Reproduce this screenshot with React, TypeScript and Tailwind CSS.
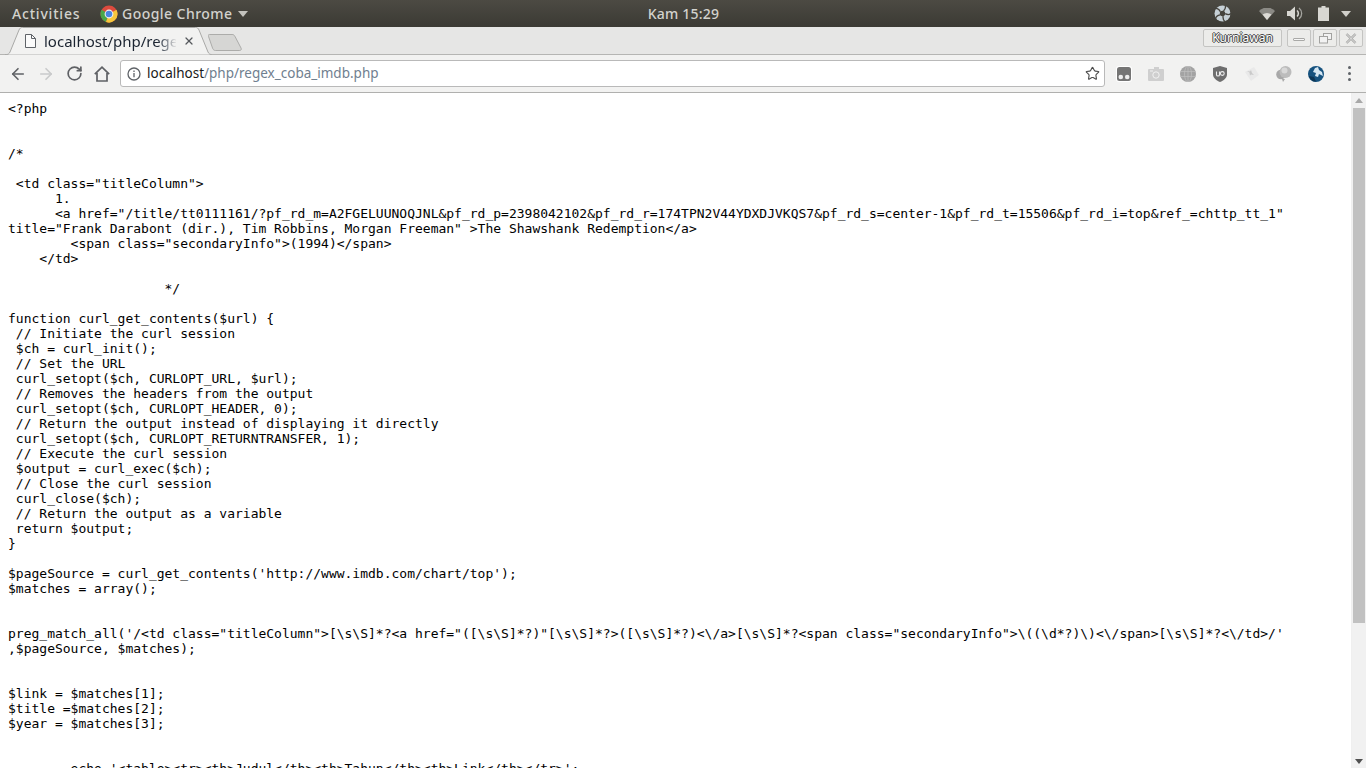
import { ArrowLeft, ArrowRight, RotateCw, Star, X } from "lucide-react";

const SOURCE = `<?php


/*

 <td class="titleColumn">
      1.
      <a href="/title/tt0111161/?pf_rd_m=A2FGELUUNOQJNL&pf_rd_p=2398042102&pf_rd_r=174TPN2V44YDXDJVKQS7&pf_rd_s=center-1&pf_rd_t=15506&pf_rd_i=top&ref_=chttp_tt_1"
title="Frank Darabont (dir.), Tim Robbins, Morgan Freeman" >The Shawshank Redemption</a>
        <span class="secondaryInfo">(1994)</span>
    </td>

                    */

function curl_get_contents($url) {
 // Initiate the curl session
 $ch = curl_init();
 // Set the URL
 curl_setopt($ch, CURLOPT_URL, $url);
 // Removes the headers from the output
 curl_setopt($ch, CURLOPT_HEADER, 0);
 // Return the output instead of displaying it directly
 curl_setopt($ch, CURLOPT_RETURNTRANSFER, 1);
 // Execute the curl session
 $output = curl_exec($ch);
 // Close the curl session
 curl_close($ch);
 // Return the output as a variable
 return $output;
}

$pageSource = curl_get_contents('http://www.imdb.com/chart/top');
$matches = array();


preg_match_all('/<td class="titleColumn">[\\s\\S]*?<a href="([\\s\\S]*?)"[\\s\\S]*?>([\\s\\S]*?)<\\/a>[\\s\\S]*?<span class="secondaryInfo">\\((\\d*?)\\)<\\/span>[\\s\\S]*?<\\/td>/'
,$pageSource, $matches);


$link = $matches[1];
$title =$matches[2];
$year = $matches[3];


        echo '<table><tr><th>Judul</th><th>Tahun</th><th>Link</th></tr>';`;

function ChromeLogo() {
  return (
    <svg width="18" height="18" viewBox="0 0 18 18">
      <circle cx="9" cy="9" r="8.5" fill="#dd4b3e" />
      <path d="M9 9 L1.6 4.8 A8.5 8.5 0 0 0 6 17 Z" fill="#4aa64a" />
      <path d="M9 9 L6 17 A8.5 8.5 0 0 0 17.4 7.5 L16.5 4.8 Z" fill="#f6c63c" />
      <circle cx="9" cy="9" r="4.4" fill="#f1f1f1" />
      <circle cx="9" cy="9" r="3.3" fill="#4a86e0" />
    </svg>
  );
}

function TopBar() {
  return (
    <div className="flex h-[27px] shrink-0 items-center bg-gradient-to-b from-[#4c4a43] to-[#3b3a34] font-['Noto_Sans',sans-serif] text-[14px] font-medium text-[#d3d2cd]">
      <span className="ml-3 w-[88px] tracking-[0.8px]">Activities</span>
      <ChromeLogo />
      <span className="ml-1 tracking-[0.45px]">Google Chrome</span>
      <svg className="ml-[6px]" width="10" height="6" viewBox="0 0 10 6">
        <path d="M0 0h10L5 6z" fill="#c4c3be" />
      </svg>
      <span className="ml-[399px] w-[72px] text-center tracking-[0.2px]">Kam 15:29</span>

      <div className="ml-auto flex items-center">
        {/* aperture style tray icon */}
        <svg width="17" height="17" viewBox="-8.500 -8.500 17 17" fill="none">
          <circle r="8" fill="#c6d0d6" />
          <g stroke="#45433d" strokeWidth="1.300">
            <path d="M1 -2.500 C3 -4.500 3.500 -6.500 2.500 -8.500" />
            <path d="M1 -2.500 C3 -4.500 3.500 -6.500 2.500 -8.500" transform="rotate(72)" />
            <path d="M1 -2.500 C3 -4.500 3.500 -6.500 2.500 -8.500" transform="rotate(144)" />
            <path d="M1 -2.500 C3 -4.500 3.500 -6.500 2.500 -8.500" transform="rotate(216)" />
            <path d="M1 -2.500 C3 -4.500 3.500 -6.500 2.500 -8.500" transform="rotate(288)" />
          </g>
          <circle r="2.700" fill="#45433d" />
        </svg>
        <svg className="ml-[28px]" width="16" height="12" viewBox="0 0 16 12">
          <path d="M0 3 A11 11 0 0 1 16 3 L8 12 Z" fill="#8b8a85" />
          <path d="M3.600 6.600 A6.500 6.500 0 0 1 12.400 6.600 L8 12 Z" fill="#dcdbd6" />
        </svg>
        <svg className="ml-[12px]" width="16" height="15" viewBox="0 0 16 15" fill="none">
          <path d="M0 5h3l5-4.500v14L3 10H0z" fill="#d8d7d2" />
          <path d="M10 4.500a4 4 0 0 1 0 6" stroke="#d8d7d2" strokeWidth="1.500" />
          <path d="M12 2a7 7 0 0 1 0 11" stroke="#a5a49f" strokeWidth="1.300" />
        </svg>
        <svg className="ml-[15px]" width="11" height="15" viewBox="0 0 11 15">
          <path d="M3.500 0h4v1.500H11V15H0V1.500h3.500z" fill="#d8d7d2" />
        </svg>
        <svg className="ml-[12px] mr-[15px]" width="10" height="6" viewBox="0 0 10 6">
          <path d="M0 0h10L5 6z" fill="#d0cfca" />
        </svg>
      </div>
    </div>
  );
}

function WinButton({ children }: { children: React.ReactNode }) {
  return (
    <div className="flex h-[18px] w-[24px] items-center justify-center rounded-[2px] border border-[#c4c4c2] bg-[#ececea]">
      {children}
    </div>
  );
}

function TabStrip() {
  return (
    <div className="flex h-[28px] shrink-0 items-start border-b border-[#b5b5b3] bg-[#e6e6e5]">
      <div className="relative ml-[5px] flex h-[28px] w-[207px] items-center pl-[19px]">
        <svg className="absolute inset-0" width="207" height="28" viewBox="0 0 207 28" fill="none">
          <path d="M0 27.500h1.500C3 27.500 4 27 5 25L14 3c.7-1.700 1.600-2.500 3.500-2.500h173c1.900 0 2.800.8 3.500 2.500l9 22c1 2 2 2.500 3.500 2.500" fill="#f2f2f1" />
          <path d="M0 27.500h1.500C3 27.500 4 27 5 25L14 3c.7-1.700 1.600-2.500 3.500-2.500h173c1.900 0 2.800.8 3.500 2.500l9 22c1 2 2 2.500 3.500 2.500" stroke="#a9a9a7" />
        </svg>
        <svg className="relative" width="12" height="14" viewBox="0 0 12 14" fill="none" stroke="#5f6368">
          <path d="M1.500.5h6l4 4v9h-10z" fill="#fbfbfb" />
          <path d="M7.500.5v4h4" />
        </svg>
        <span className="relative ml-[8px] w-[132px] overflow-hidden whitespace-nowrap bg-gradient-to-r from-[#1a2330] from-[85%] to-[#e4e4e4] bg-clip-text font-['Noto_Sans',sans-serif] text-[15px] text-transparent">
          localhost/php/regex_coba_imdb.php
        </span>
        <X className="relative ml-[7px]" size={12} strokeWidth={2.500} color="#55585c" />
      </div>
      <svg className="ml-[-4px] mt-[7px]" width="35" height="17" viewBox="0 0 37 18" preserveAspectRatio="none">
        <path d="M1.500.5h24c1.500 0 2.300.7 3 2l6.500 12.500c.5 1.200 0 2.500-1.500 2.500H8c-1.500 0-2.300-.7-3-2L.5 2.500C0 1.300.3.500 1.500.5z" fill="#d6d6d4" stroke="#a8a8a6" />
      </svg>

      <div className="ml-auto mr-[3px] mt-[2px] flex items-center gap-[2px]">
        <div className="mr-[3px] flex h-[18px] w-[79px] items-center justify-center rounded-[2px] border border-[#c4c4c2] bg-[#ececea] font-['Noto_Sans',sans-serif] text-[12px] text-white [text-shadow:1px_0_0_#444,-1px_0_0_#444,0_1px_0_#444,0_-1px_0_#444]">
          Kurniawan
        </div>
        <WinButton>
          <span className="mt-[3px] h-[3px] w-[12px] rounded-[1px] border border-[#a9a9a7] bg-[#f5f5f5]" />
        </WinButton>
        <WinButton>
          <svg width="13" height="11" viewBox="0 0 13 11" fill="#f2f2f2" stroke="#a2a2a0">
            <rect x="4.500" y="0.500" width="8" height="6" />
            <rect x="0.500" y="3.500" width="8" height="6.500" />
          </svg>
        </WinButton>
        <WinButton>
          <svg width="12" height="11" viewBox="0 0 12 11">
            <path d="M1.500 1l9 9M10.500 1l-9 9" stroke="#a2a2a0" strokeWidth="2.400" />
            <path d="M1.500 1l9 9M10.500 1l-9 9" stroke="#f5f5f5" strokeWidth="0.800" />
          </svg>
        </WinButton>
      </div>
    </div>
  );
}

function ExtensionIcons() {
  return (
    <div className="ml-[11px] flex items-center gap-[16px]">
      {/* rounded square with two dots */}
      <svg width="16" height="16" viewBox="0 0 16 16">
        <rect width="16" height="16" rx="3" fill="#fff" />
        <rect x="1" y="1" width="14" height="14" rx="2.500" fill="#757575" />
        <circle cx="4.800" cy="11" r="2.300" fill="#eee" />
        <circle cx="11.200" cy="11" r="2.300" fill="#eee" />
      </svg>
      <svg width="16" height="14" viewBox="0 0 16 14">
        <rect y="2" width="16" height="12" rx="1" fill="#cfcfcf" />
        <rect x="6" width="5" height="3" fill="#cfcfcf" />
        <rect x="2" y="3.500" width="3" height="1" fill="#f2f2f2" />
        <circle cx="8" cy="8" r="3.200" fill="#cfcfcf" stroke="#f2f2f2" />
      </svg>
      <svg width="16" height="16" viewBox="0 0 16 16" fill="none">
        <circle cx="8" cy="8" r="8" fill="#a3a3a3" />
        <g stroke="#c0c0c0" strokeWidth="0.700">
          <ellipse cx="8" cy="8" rx="3.500" ry="8" />
          <path d="M0 5.500h16M0 10.500h16M8 0v16" />
        </g>
      </svg>
      <svg width="16" height="16" viewBox="0 0 16 16">
        <path d="M8 0l7 2v6.500c0 3.500-3.500 6-7 7.500-3.500-1.500-7-4-7-7.500V2z" fill="#6e6e6e" />
        <path d="M4.500 5.500v3.200c0 1.800 3 1.800 3 0V5.500" stroke="#eee" strokeWidth="1.100" fill="none" />
        <circle cx="10.300" cy="7.500" r="1.900" stroke="#eee" strokeWidth="1.100" fill="none" />
      </svg>
      <svg width="16" height="16" viewBox="0 0 16 16">
        <path d="M1 6l9-5 5 8-8 6z" fill="#e9e9e9" />
        <path d="M3 5l3 .5 1-1.500 1 3 2 2-3-.5-1 1-.5-3z" fill="#c9c9c9" />
      </svg>
      <svg width="16" height="16" viewBox="0 0 16 16">
        <circle cx="5" cy="8.500" r="4.800" fill="#a8a8a8" />
        <path d="M6 13l1 3 2-3z" fill="#a8a8a8" />
        <circle cx="9.500" cy="6" r="6" fill="#bcbcbc" />
        <circle cx="8.500" cy="4.500" r="3" fill="#d8d8d8" />
      </svg>
      <svg width="16" height="16" viewBox="0 0 16 16">
        <circle cx="8" cy="8" r="8" fill="#16527f" />
        <path d="M7 2l3-1 1 3 3 2 1 4-4-2-1 3-3-1 1-3-3-1z" fill="#d5e6f2" />
        <path d="M1 10l5 1 2 4.500C5 16 2 13.500 1 10z" fill="#0d3656" />
      </svg>
    </div>
  );
}

function Toolbar() {
  return (
    <div className="flex h-[38px] shrink-0 items-center border-b border-[#b0b0ae] bg-[#f2f2f1]">
      <ArrowLeft className="ml-[9px]" size={18} strokeWidth={2.200} color="#5f6165" />
      <ArrowRight className="ml-[10px]" size={18} strokeWidth={2.200} color="#c9cacb" />
      <RotateCw className="ml-[11px]" size={17} strokeWidth={2.400} color="#5f6165" />
      <svg className="ml-[11px]" width="16" height="16" viewBox="0 0 16 16" fill="none" stroke="#5f6165" strokeWidth="1.700">
        <path d="M.8 8.200L8 1.200l7.200 7M3 7v8h10V7" />
      </svg>
      <div className="ml-[10px] flex h-[27px] w-[985px] items-center rounded-[3px] border border-[#b9b9b9] bg-white pl-[6px] pr-[4px]">
        <svg width="14" height="14" viewBox="0 0 14 14" fill="none" stroke="#5f6368" strokeWidth="1.300">
          <circle cx="7" cy="7" r="6" />
          <path d="M7 6v4.200M7 3.500v1.400" />
        </svg>
        <span className="ml-[6px] font-['Noto_Sans',sans-serif] text-[13.500px] text-[#1a1a1a]">
          localhost<span className="text-[#70808f]">/php/regex_coba_imdb.php</span>
        </span>
        <Star className="ml-auto" size={15} strokeWidth={1.800} color="#4c4c4c" />
      </div>
      <ExtensionIcons />
      <div className="ml-[24px] flex flex-col gap-[3px]">
        <span className="h-[3px] w-[3px] rounded-full bg-[#5f6368]" />
        <span className="h-[3px] w-[3px] rounded-full bg-[#5f6368]" />
        <span className="h-[3px] w-[3px] rounded-full bg-[#5f6368]" />
      </div>
    </div>
  );
}

function Scrollbar() {
  return (
    <div className="flex w-[15px] shrink-0 flex-col items-center border-l border-[#efefef] bg-[#f1f1f1]">
      <svg className="mt-[5px]" width="8" height="5" viewBox="0 0 8 5">
        <path d="M4 0l4 5H0z" fill="#a8a8a8" />
      </svg>
      <div className="mt-[5px] h-[515px] w-[12px] bg-[#c1c1c1]" />
      <svg className="mb-[4px] mt-auto" width="8" height="5" viewBox="0 0 8 5">
        <path d="M0 0h8L4 5z" fill="#505050" />
      </svg>
    </div>
  );
}

export default function App() {
  return (
    <div className="flex h-screen flex-col overflow-hidden bg-white">
      <TopBar />
      <TabStrip />
      <Toolbar />
      <div className="flex min-h-0 flex-1">
        <pre className="min-w-0 flex-1 overflow-hidden whitespace-pre pl-2 pt-2 font-['DejaVu_Sans_Mono',monospace] text-[13px] leading-[15px] text-black">
          {SOURCE}
        </pre>
        <Scrollbar />
      </div>
    </div>
  );
}
